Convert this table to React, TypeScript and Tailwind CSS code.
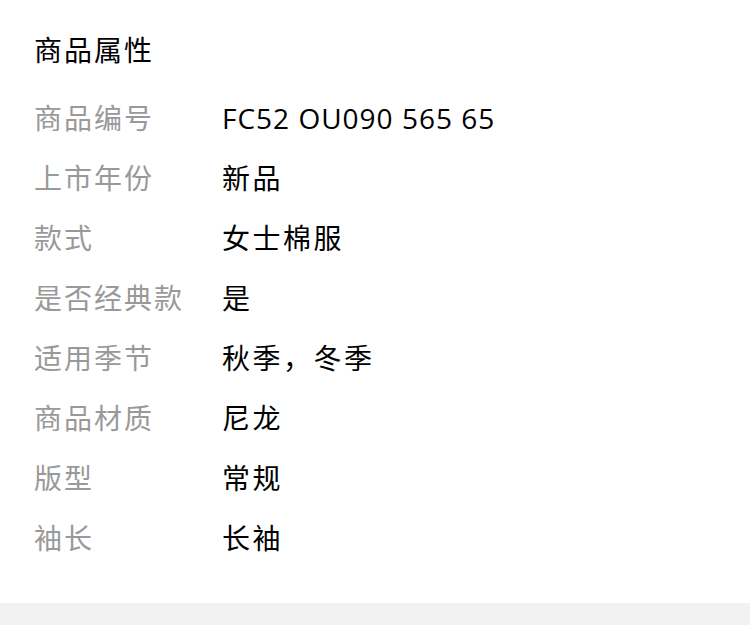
const rows: [string, string, string][] = [
    ['商品编号', 'FC52 OU090 565 65', 'tracking-[1px]'],
    ['上市年份', '新品', 'tracking-[2.5px]'],
    ['款式', '女士棉服', 'tracking-[2.5px]'],
    ['是否经典款', '是', 'tracking-[2.5px]'],
    ['适用季节', '秋季，冬季', 'tracking-[2.5px]'],
    ['商品材质', '尼龙', 'tracking-[2.5px]'],
    ['版型', '常规', 'tracking-[2.5px]'],
    ['袖长', '长袖', 'tracking-[2.5px]'],
];

const App = () => {
    return (
        <div className="w-[750px] min-h-[625px] bg-white font-['Open_Sans','Noto_Sans_CJK_SC',sans-serif]">
            <section className="pt-[20px] pb-[35px] px-[34px]">
                <h2 className="h-[60px] leading-[60px] text-[28px] tracking-[2px] text-black">
                    商品属性
                </h2>
                <ul className="mt-[8px]">
                    {rows.map(([label, value, spacing]) => (
                        <li key={label} className="flex h-[60px] items-center text-[28px]">
                            <span className="w-[188px] shrink-0 tracking-[2px] text-[#999999]">
                                {label}
                            </span>
                            <span className={`${spacing} text-black`}>{value}</span>
                        </li>
                    ))}
                </ul>
            </section>
            <div className="h-[22px] bg-[#f2f2f2]" />
        </div>
    );
};

export default App;
